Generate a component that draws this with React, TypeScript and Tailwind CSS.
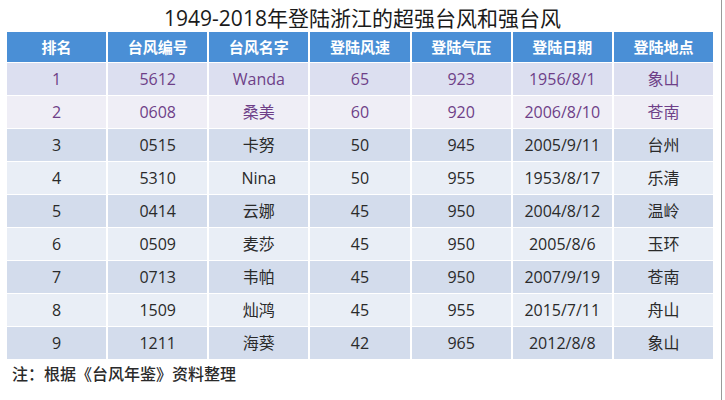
import React from "react";

const HEAD = ["排名", "台风编号", "台风名字", "登陆风速", "登陆气压", "登陆日期", "登陆地点"];

const ROWS: string[][] = [
  ["1", "5612", "Wanda", "65", "923", "1956/8/1", "象山"],
  ["2", "0608", "桑美", "60", "920", "2006/8/10", "苍南"],
  ["3", "0515", "卡努", "50", "945", "2005/9/11", "台州"],
  ["4", "5310", "Nina", "50", "955", "1953/8/17", "乐清"],
  ["5", "0414", "云娜", "45", "950", "2004/8/12", "温岭"],
  ["6", "0509", "麦莎", "45", "950", "2005/8/6", "玉环"],
  ["7", "0713", "韦帕", "45", "950", "2007/9/19", "苍南"],
  ["8", "1509", "灿鸿", "45", "955", "2015/7/11", "舟山"],
  ["9", "1211", "海葵", "42", "965", "2012/8/8", "象山"],
];

// first two rows are tinted purple in the source slide
function rowBg(i: number) {
  if (i === 0) return "bg-[#dcdff0]";
  if (i === 1) return "bg-[#efeef6]";
  return i % 2 === 0 ? "bg-[#d3dcec]" : "bg-[#e9eef6]";
}

export default function App() {
  return (
    <div
      className="relative h-[400px] w-[725px] overflow-hidden bg-white"
      style={{ fontFamily: '"Open Sans", "Noto Sans CJK SC", sans-serif' }}
    >
      <h1 className="pt-[4px] text-center text-[21px] leading-[28px] text-[#1a1a1a]">
        1949-2018年登陆浙江的超强台风和强台风
      </h1>

      <div className="ml-[7px] grid w-[706px] grid-cols-7 gap-x-[2px] gap-y-[1px] bg-white">
        {HEAD.map((h) => (
          <div
            key={h}
            className="flex h-[30px] items-center justify-center bg-[#4a8fd6] text-[15px] font-bold text-white"
          >
            {h}
          </div>
        ))}
        {ROWS.map((row, i) =>
          row.map((cell, j) => (
            <div
              key={`${i}-${j}`}
              className={`flex h-[32px] items-center justify-center text-[16px] ${rowBg(i)} ${
                i < 2 ? "text-[#6e3f88]" : "text-[#2a2a2a]"
              }`}
            >
              {cell}
            </div>
          )),
        )}
      </div>

      <p className="ml-[12px] mt-[5px] text-[16px] font-medium leading-[20px] text-[#2a2a2a]">
        注：根据《台风年鉴》资料整理
      </p>

      <div className="absolute right-[3px] top-0 h-full w-px bg-[#9a9a9a]" />
    </div>
  );
}
